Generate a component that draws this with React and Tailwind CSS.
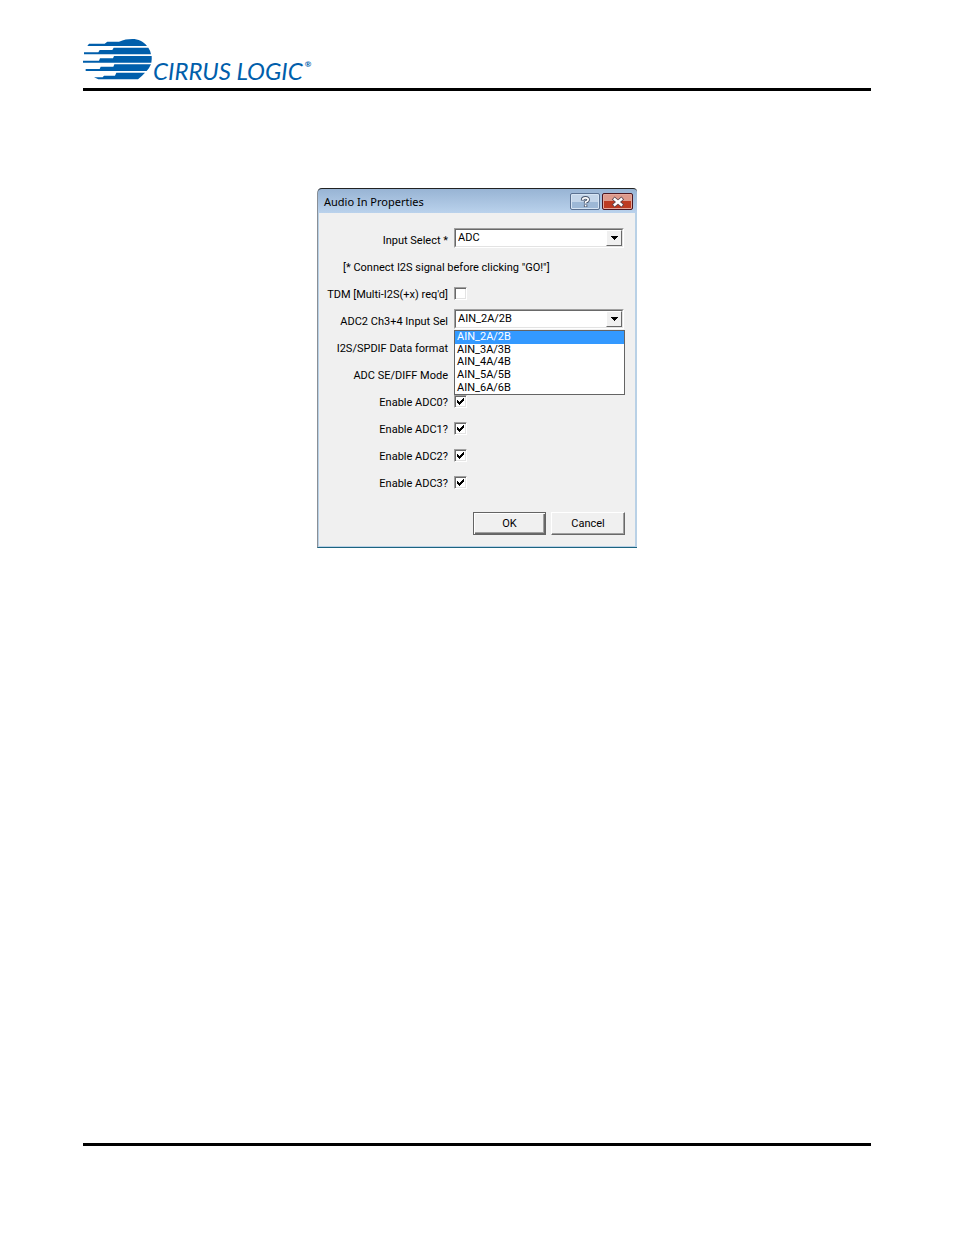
import { useState } from "react";

const inputOptions = ["AIN_2A/2B", "AIN_3A/3B", "AIN_4A/4B", "AIN_5A/5B", "AIN_6A/6B"];

function Logo() {
  return (
    <div className="flex h-[42px] text-[#005eab]">
      <svg viewBox="24 27 207 126" className="h-[42px] w-[69px]" fill="currentColor" aria-hidden="true">
        <path d="M37 48 L42 41 H89 L97 35.5 H132 C146 29 158 27 172 27 C190 27 205 34 216 48 Z" />
        <path d="M27 73 V67 H70 L74 60 H112 L116 53 H220 Q226 61 228 73 Z" />
        <path d="M24 98.5 V92 H72 L75 85 H114 L117 78 H230 Q231 88 229 98.5 Z" />
        <path d="M32 123 V117 H74 L77 110 H115 L118 103 H228 Q224 113 215 123 Z" />
        <path d="M70 148 L57 142 H83 L87 137 H120 L124 128 H210 Q200 139 189 148 Z" />
      </svg>
      <span className="mt-[18px] ml-px font-[Lato] text-[24px] leading-7 italic whitespace-nowrap">
        CIRRUS LOGIC
      </span>
      <span className="mt-[19px] ml-0.5 font-[Lato] text-[8px] leading-3 font-bold">®</span>
    </div>
  );
}

function Combo({ id, value, onChange, options, children }) {
  return (
    <div className="relative mt-0.5 w-full pr-px">
      <div className="flex h-5 border border-t-[#a0a0a0] border-l-[#a0a0a0] border-r-white border-b-white">
        <div className="relative flex flex-1 border border-t-[#696969] border-l-[#696969] border-r-[#e3e3e3] border-b-[#e3e3e3] bg-white">
          <select
            id={id}
            value={value}
            onChange={onChange}
            className="w-full appearance-none bg-transparent pl-0.5 leading-4 outline-none"
          >
            {options.map((o) => (
              <option key={o}>{o}</option>
            ))}
          </select>
          <span className="pointer-events-none absolute top-0 right-0 flex h-4 w-4 items-center justify-center border border-t-white border-l-white border-r-[#696969] border-b-[#696969] bg-[#f0f0f0]">
            <svg viewBox="0 0 7 4" className="h-1 w-[7px]" shapeRendering="crispEdges">
              <path d="M0 0 H7 V1 H6 V2 H5 V3 H4 V4 H3 V3 H2 V2 H1 V1 H0 Z" />
            </svg>
          </span>
        </div>
      </div>
      {children}
    </div>
  );
}

function Check({ id, defaultChecked }) {
  return (
    <span className="relative mt-[7px] block h-[13px] w-[13px]">
      <input
        id={id}
        type="checkbox"
        defaultChecked={defaultChecked}
        className="peer block h-[13px] w-[13px] appearance-none border border-t-[#a0a0a0] border-l-[#a0a0a0] border-r-white border-b-white bg-white shadow-[inset_1px_1px_0_#696969,inset_-1px_-1px_0_#e3e3e3]"
      />
      <svg
        viewBox="0 0 7 7"
        shapeRendering="crispEdges"
        className="pointer-events-none absolute top-[3px] left-[3px] hidden h-[7px] w-[7px] peer-checked:block"
      >
        <path d="M0 2 H1 V3 H2 V4 H3 V3 H4 V2 H5 V1 H6 V0 H7 V3 H6 V4 H5 V5 H4 V6 H3 V7 H2 V6 H1 V5 H0 Z" />
      </svg>
    </span>
  );
}

function Label({ htmlFor, children }) {
  return (
    <label htmlFor={htmlFor} className="pt-[7px] text-right leading-4 whitespace-nowrap">
      {children}
    </label>
  );
}

function TitleBar() {
  return (
    <div className="flex h-[25px] items-start justify-between rounded-t-[4px] border-t border-[#222] bg-linear-to-b from-[#98b4d4] to-[#bad2ec] pr-1 pl-1.5">
      <h1 className="pt-[5px] font-['Noto_Sans'] text-[11px] leading-4">Audio In Properties</h1>
      <div className="flex gap-0.5 pt-1">
        <button
          aria-label="Help"
          className="flex h-[17px] w-[30px] items-center justify-center rounded-[2px] border border-[#5a7090] bg-linear-to-b from-[#c3d5e9] from-50% to-[#9db8d6] to-50% shadow-[inset_0_0_0_1px_#d6e4f3]"
        >
          <svg viewBox="0 0 9 12" className="h-3 w-[9px] overflow-visible" fill="none">
            <path d="M1.6 4.4 V3.4 Q1.8 1.8 4.5 1.8 Q7.2 1.8 7.2 3.8 Q7.2 5.2 4.6 6 V7.6 M4.6 8.6 V11" stroke="#46536a" strokeWidth="3.4" />
            <path d="M1.6 3.8 Q1.8 1.8 4.5 1.8 Q7.2 1.8 7.2 3.8 Q7.2 5.2 4.6 6 V7.4 M4.6 8.8 V10.4" stroke="#fff" strokeWidth="1.7" />
          </svg>
        </button>
        <button
          aria-label="Close"
          className="flex h-[17px] w-[31px] items-center justify-center rounded-[2px] border border-[#4b1620] bg-linear-to-b from-[#dd9a8c] from-45% to-[#bd3b22] to-45% shadow-[inset_0_0_0_1px_#e5a89c]"
        >
          <svg viewBox="0 0 12 10" className="h-2.5 w-3 overflow-visible" fill="none">
            <path d="M1.2 1 L10.8 9 M10.8 1 L1.2 9" stroke="#5b4650" strokeWidth="4.2" />
            <path d="M1.8 1.5 L10.2 8.5 M10.2 1.5 L1.8 8.5" stroke="#fff" strokeWidth="2.4" />
          </svg>
        </button>
      </div>
    </div>
  );
}

export default function App() {
  const [source, setSource] = useState("ADC");
  const [input, setInput] = useState(inputOptions[0]);
  return (
    <div className="flex min-h-screen flex-col bg-white px-[83px] text-black">
      <header className="border-b-3 border-black pt-[39px] pb-[7px]">
        <Logo />
      </header>
      <main className="flex flex-1 flex-col items-center pt-[97px]">
        <section className="w-80 rounded-t-[5px] border-b border-l border-b-[#1c6480] border-l-[#8a8f96] bg-[#b9d1e6] font-['Roboto','Liberation_Sans',sans-serif] text-[11px]">
          <TitleBar />
          <form
            onSubmit={(e) => e.preventDefault()}
            className="mr-0.5 mb-px ml-px bg-[#f0f0f0] pt-[13px] pr-2.5 pb-[11px] pl-1"
          >
            <div className="grid auto-rows-[27px] grid-cols-[125px_1fr] items-start gap-x-1.5">
              <Label htmlFor="source">Input Select *</Label>
              <Combo id="source" value={source} onChange={(e) => setSource(e.target.value)} options={["ADC", "SPDIF"]} />

              <p className="col-span-2 pt-[7px] pl-5 leading-4 whitespace-nowrap">
                [* Connect I2S signal before clicking "GO!"]
              </p>

              <Label htmlFor="tdm">TDM [Multi-I2S(+x) req'd]</Label>
              <Check id="tdm" />

              <Label htmlFor="adc2">ADC2 Ch3+4 Input Sel</Label>
              <Combo id="adc2" value={input} onChange={(e) => setInput(e.target.value)} options={inputOptions}>
                <ul
                  role="listbox"
                  aria-label="ADC2 Ch3+4 Input Sel options"
                  className="absolute top-[21px] left-0 z-10 flex h-[65px] w-full flex-col border border-[#646464] bg-white"
                >
                  {inputOptions.map((o) => (
                    <li
                      key={o}
                      role="option"
                      aria-selected={o === input}
                      onClick={() => setInput(o)}
                      className="flex flex-1 items-center pl-0.5 leading-3 aria-selected:bg-[#3399ff] aria-selected:text-white"
                    >
                      {o}
                    </li>
                  ))}
                </ul>
              </Combo>

              <span className="pt-[7px] text-right leading-4 whitespace-nowrap">I2S/SPDIF Data format</span>
              <span />
              <span className="pt-[7px] text-right leading-4 whitespace-nowrap">ADC SE/DIFF Mode</span>
              <span />

              <Label htmlFor="en0">Enable ADC0?</Label>
              <Check id="en0" defaultChecked />
              <Label htmlFor="en1">Enable ADC1?</Label>
              <Check id="en1" defaultChecked />
              <Label htmlFor="en2">Enable ADC2?</Label>
              <Check id="en2" defaultChecked />
              <Label htmlFor="en3">Enable ADC3?</Label>
              <Check id="en3" defaultChecked />
            </div>
            <div className="mt-4 flex justify-end gap-[5px]">
              <button
                type="submit"
                className="h-[23px] w-[73px] border border-[#646464] bg-[#f0f0f0] leading-4 shadow-[inset_1px_1px_0_#fff,inset_-1px_-1px_0_#696969,inset_-2px_-2px_0_#a0a0a0]"
              >
                OK
              </button>
              <button
                type="button"
                className="h-[23px] w-[74px] border border-t-white border-l-white border-r-[#696969] border-b-[#696969] bg-[#f0f0f0] leading-4 shadow-[inset_-1px_-1px_0_#a0a0a0]"
              >
                Cancel
              </button>
            </div>
          </form>
        </section>
      </main>
      <footer className="h-[92px] border-t-3 border-black" />
    </div>
  );
}
